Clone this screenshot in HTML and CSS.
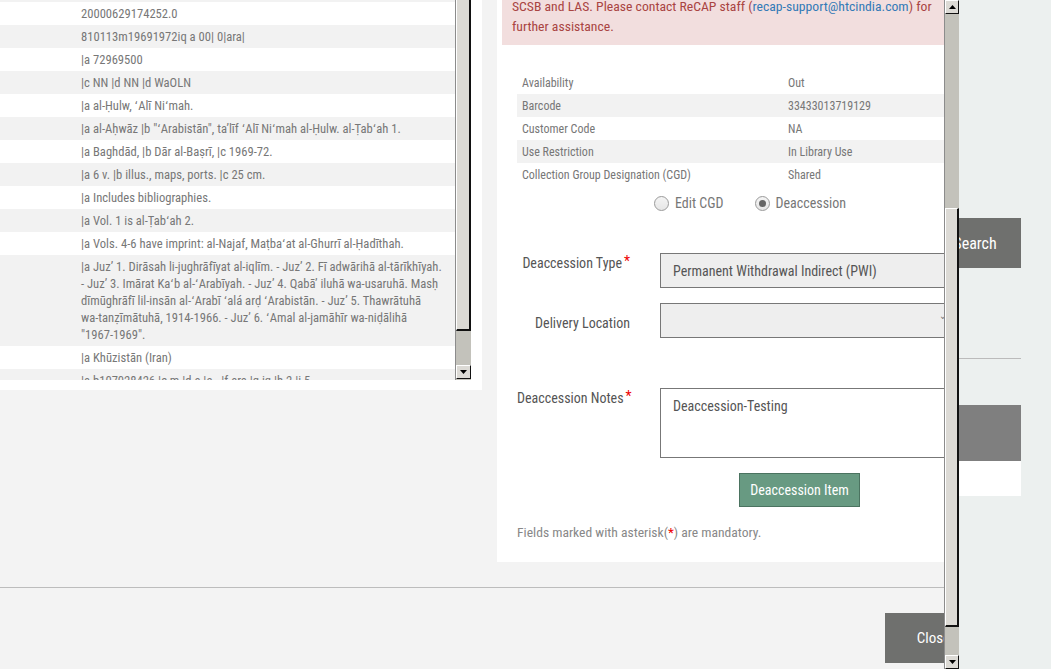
FILE: index.html
```html
<!DOCTYPE html>
<html lang="en">
<head>
<meta charset="utf-8">
<title>Deaccession</title>
<link rel="stylesheet" href="styles.css">
</head>
<body>
<div class="screen">
  <div class="modal">
    <div class="modal-body">
      <section class="marc">
        <div class="marc-view">
          <div class="marc-rows">
            <div class="mrow alt"><span class="tag"></span><span class="val">ocm06962948</span></div>
            <div class="mrow"><span class="tag"></span><span class="val">20000629174252.0</span></div>
            <div class="mrow alt"><span class="tag"></span><span class="val">810113m19691972iq a 00| 0|ara|</span></div>
            <div class="mrow"><span class="tag"></span><span class="val">|a 72969500</span></div>
            <div class="mrow alt"><span class="tag"></span><span class="val">|c NN |d NN |d WaOLN</span></div>
            <div class="mrow"><span class="tag"></span><span class="val">|a al-Ḥulw, ʻAlī Niʻmah.</span></div>
            <div class="mrow alt"><span class="tag"></span><span class="val">|a al-Aḥwāz |b "ʻArabistān", taʼlīf ʻAlī Niʻmah al-Ḥulw. al-Ṭabʻah 1.</span></div>
            <div class="mrow"><span class="tag"></span><span class="val">|a Baghdād, |b Dār al-Baṣrī, |c 1969-72.</span></div>
            <div class="mrow alt"><span class="tag"></span><span class="val">|a 6 v. |b illus., maps, ports. |c 25 cm.</span></div>
            <div class="mrow"><span class="tag"></span><span class="val">|a Includes bibliographies.</span></div>
            <div class="mrow alt"><span class="tag"></span><span class="val">|a Vol. 1 is al-Ṭabʻah 2.</span></div>
            <div class="mrow"><span class="tag"></span><span class="val">|a Vols. 4-6 have imprint: al-Najaf, Maṭbaʻat al-Ghurrī al-Ḥadīthah.</span></div>
            <div class="mrow alt"><span class="tag"></span><span class="val">|a Juzʼ 1. Dirāsah li-jughrāfīyat al-iqlīm. - Juzʼ 2. Fī adwārihā al-tārīkhīyah.<br>- Juzʼ 3. Imārat Kaʻb al-ʻArabīyah. - Juzʼ 4. Qabāʼ iluhā wa-usaruhā. Masḥ<br>dīmūghrāfī lil-insān al-ʻArabī ʻalá arḍ ʻArabistān. - Juzʼ 5. Thawrātuhā<br>wa-tanẓīmātuhā, 1914-1966. - Juzʼ 6. ʻAmal al-jamāhīr wa-niḍālihā<br>"1967-1969".</span></div>
            <div class="mrow"><span class="tag"></span><span class="val">|a Khūzistān (Iran)</span></div>
            <div class="mrow alt"><span class="tag"></span><span class="val">|a b107028426 |c m |d a |e - |f ara |g iq |h 2 |i 5</span></div>
          </div>
        </div>
        <div class="vscroll small">
          <div class="thumb thumb-small"></div>
          <div class="track"></div>
          <div class="arrow"><svg width="7" height="4" viewBox="0 0 7 4"><path d="M0 0H7L3.5 4Z" fill="#000"/></svg></div>
        </div>
      </section>

      <section class="item">
        <div class="alert">SCSB and LAS. Please contact ReCAP staff (<a href="#">recap-support@htcindia.com</a>) for<br>further assistance.</div>

        <div class="details">
          <div class="drow"><span class="dk">Availability</span><span class="dv">Out</span></div>
          <div class="drow alt"><span class="dk">Barcode</span><span class="dv">33433013719129</span></div>
          <div class="drow"><span class="dk">Customer Code</span><span class="dv">NA</span></div>
          <div class="drow alt"><span class="dk">Use Restriction</span><span class="dv">In Library Use</span></div>
          <div class="drow"><span class="dk">Collection Group Designation (CGD)</span><span class="dv">Shared</span></div>
        </div>

        <div class="radios">
          <label class="radio"><span class="dot"></span>Edit CGD</label>
          <label class="radio on"><span class="dot"></span>Deaccession</label>
        </div>

        <div class="fgroup first">
          <div class="flabel">Deaccession Type<span class="req">*</span></div>
          <div class="select">Permanent Withdrawal Indirect (PWI)</div>
        </div>
        <div class="fgroup second">
          <div class="flabel low">Delivery Location</div>
          <div class="select empty"><span class="caret">⌄</span></div>
        </div>
        <div class="fgroup third">
          <div class="flabel">Deaccession Notes<span class="req">*</span></div>
          <div class="textarea">Deaccession-Testing</div>
        </div>

        <button class="btn-deacc">Deaccession Item</button>

        <p class="note">Fields marked with asterisk(<span class="req-in">*</span>) are mandatory.</p>
      </section>
    </div>
    <div class="modal-footer">
      <button class="btn-close">Close</button>
    </div>
  </div>

  <div class="vscroll main">
    <div class="arrow"><svg width="7" height="4" viewBox="0 0 7 4"><path d="M0 4H7L3.5 0Z" fill="#000"/></svg></div>
    <div class="track t1"></div>
    <div class="thumb thumb-main"></div>
    <div class="track t2"></div>
    <div class="arrow"><svg width="7" height="4" viewBox="0 0 7 4"><path d="M0 0H7L3.5 4Z" fill="#000"/></svg></div>
  </div>

  <div class="page">
    <button class="btn-search">Search</button>
    <div class="rule"></div>
    <div class="grey-block"></div>
    <div class="white-block"></div>
  </div>
</div>
</body>
</html>
```

FILE: styles.css
```css
* { box-sizing: border-box; }

html, body {
  margin: 0;
  padding: 0;
}

body {
  font-family: "Roboto Condensed", "Liberation Sans Narrow", "DejaVu Sans Condensed", Roboto, sans-serif;
  color: #777;
  background: #ecf0ef;
}

.screen {
  display: flex;
  width: 1051px;
  height: 669px;
  overflow: hidden;
}

.modal {
  width: 944px;
  flex: none;
  height: 669px;
  background: #f3f3f3;
  overflow: hidden;
  display: flex;
  flex-direction: column;
}

.modal-body {
  display: flex;
  align-items: flex-start;
  gap: 15px;
}

/* left MARC panel */
.marc {
  width: 482px;
  height: 390px;
  flex: none;
  background: #fff;
  display: flex;
  padding: 0 11px 10px 0;
}

.marc-view {
  width: 455px;
  height: 380px;
  overflow: hidden;
}

.marc-rows {
  margin-top: -21px;
}

.mrow {
  display: grid;
  grid-template-columns: 76px 1fr;
  padding: 3px 5px;
  font-size: 12.6px;
  line-height: 17px;
  color: #777;
  background: #fff;
  white-space: nowrap;
}

.mrow.alt { background: #f2f2f2; }

/* fake scrollbars */
.vscroll {
  display: flex;
  flex-direction: column;
  background: #c3c2bb;
  border-left: 1px solid #8c8c8c;
}

.vscroll.small {
  width: 16px;
  height: 380px;
}

.vscroll.main {
  width: 15px;
  height: 669px;
  flex: none;
}

.track { flex: none; }
.vscroll.small .track { height: 34px; }
.track.t1 { height: 194px; }
.track.t2 { height: 28px; }

.thumb {
  background: #dcdad5;
  border-top: 1px solid #fff;
  border-left: 1px solid #fff;
  border-right: 2px solid #111;
  border-bottom: 2px solid #111;
}

.thumb-small { height: 331px; border-top: 0; }
.thumb-main { height: 419px; }

.arrow {
  height: 14px;
  flex: none;
  background: #dcdad5;
  border-top: 1px solid #fff;
  border-left: 1px solid #fff;
  border-right: 1px solid #111;
  border-bottom: 1px solid #111;
  display: flex;
  align-items: center;
  justify-content: center;
}

.arrow svg { display: block; }

/* right item panel */
.item {
  width: 447px;
  height: 562px;
  flex: none;
  background: #fff;
  padding: 0 0 0 20px;
  overflow: hidden;
}

.alert {
  margin: -4px 0 0 -15px;
  width: 460px;
  padding: 0 0 9px 10px;
  background: #f2dede;
  color: #a94442;
  font-size: 13.7px;
  line-height: 20px;
  white-space: nowrap;
}

.alert a {
  color: #337ab7;
  text-decoration: none;
}

.details {
  margin-top: 26px;
  width: 460px;
}

.drow {
  display: grid;
  grid-template-columns: 266px 1fr;
  padding: 0 5px;
  height: 23px;
  align-items: center;
  font-size: 12px;
  color: #777;
}

.drow.alt { background: #f2f2f2; }

.radios {
  margin-top: 7px;
  padding-left: 137px;
  display: flex;
  gap: 31px;
  font-size: 14px;
  line-height: 20px;
  color: #777;
}

.radio {
  display: flex;
  align-items: center;
  gap: 6px;
}

.dot {
  width: 15px;
  height: 15px;
  border-radius: 50%;
  border: 1px solid #9a9a9a;
  background: linear-gradient(#f4f4f4, #e6e6e6);
  display: flex;
  align-items: center;
  justify-content: center;
}

.radio.on .dot::after {
  content: "";
  width: 7px;
  height: 7px;
  border-radius: 50%;
  background: #666;
}

.fgroup {
  display: grid;
  grid-template-columns: 113px 300px;
  column-gap: 30px;
  font-size: 14px;
  line-height: 20px;
}

.fgroup.first { margin-top: 40px; }
.fgroup.second { margin-top: 15px; }
.fgroup.third { margin-top: 50px; }

.flabel {
  text-align: right;
  color: #555;
  white-space: nowrap;
}

.flabel.low { padding-top: 10px; }

.req {
  color: #e00;
  margin-left: 2px;
  position: relative;
  top: -2px;
}

.select {
  height: 35px;
  background: #eee;
  border: 1px solid #777;
  padding: 7px 12px;
  color: #555;
  position: relative;
}

.caret {
  position: absolute;
  left: 278px;
  top: 2px;
  font-size: 10px;
  color: #777;
}

.textarea {
  height: 70px;
  border: 1px solid #777;
  padding: 7px 12px;
  color: #555;
  background: #fff;
}

.btn-deacc {
  display: block;
  margin: 15px 0 0 222px;
  width: 121px;
  height: 34px;
  background: #689a82;
  border: 1px solid #4b7360;
  color: #fff;
  font-family: inherit;
  font-size: 14px;
  padding: 0;
}

.note {
  margin: 15px 0 0 0;
  font-size: 13.6px;
  line-height: 20px;
  color: #888;
}

.req-in { color: #e00; }

/* footer */
.modal-footer {
  margin-top: 25px;
  border-top: 1px solid #bcbcbc;
  padding-top: 25px;
  display: flex;
  justify-content: flex-end;
}

.btn-close {
  width: 97px;
  height: 50px;
  margin-right: -38px;
  background: #6f706e;
  border: 0;
  color: #fff;
  font-family: inherit;
  font-size: 15px;
  padding: 0;
}

/* page behind */
.page {
  flex: 1;
  overflow: hidden;
  padding-top: 218px;
}

.btn-search {
  display: block;
  width: 92px;
  height: 50px;
  margin-left: -30px;
  background: #6f706e;
  border: 0;
  color: #fff;
  font-family: inherit;
  font-size: 16px;
  padding: 0;
}

.rule {
  margin-top: 90px;
  width: 62px;
  border-top: 1px solid #bbb;
}

.grey-block {
  margin-top: 46px;
  width: 62px;
  height: 56px;
  background: #7f7f7f;
}

.white-block {
  width: 62px;
  height: 35px;
  background: #fff;
}
```
